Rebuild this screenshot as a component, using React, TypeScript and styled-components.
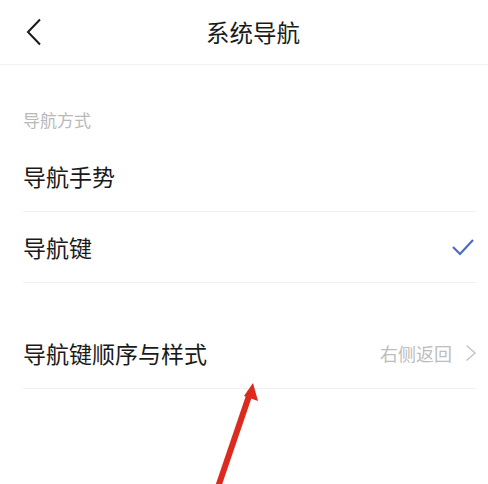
import React from "react";
import styled, { createGlobalStyle } from "styled-components";

const Global = createGlobalStyle`
  html, body { margin: 0; padding: 0; background: #ffffff; }
  body { font-family: "Noto Sans CJK SC", "Noto Sans", sans-serif; color: #1c1c1c; }
`;

const Page = styled.div`
  position: relative;
  width: 488px;
  height: 484px;
  overflow: hidden;
  background: #ffffff;
`;

const Header = styled.header`
  display: flex;
  align-items: center;
  height: 65px;
  padding-left: 26px;
  border-bottom: 1px solid #f3f3f3;
  box-sizing: border-box;
`;

const BackButton = styled.div`
  display: flex;
  width: 16px;
  height: 28px;
`;

const Title = styled.h1`
  flex: 1;
  margin: 0;
  padding-right: 24px;
  text-align: center;
  font-size: 23.5px;
  font-weight: 400;
  line-height: 30px;
  color: #1a1a1a;
`;

const SectionLabel = styled.div`
  padding: 43px 0 9px 23px;
  font-size: 17px;
  line-height: 24px;
  color: #b9b9b9;
`;

const Row = styled.div`
  display: flex;
  align-items: center;
  justify-content: space-between;
  height: 71px;
  margin: 0 11px 0 23px;
  border-bottom: 1px solid #f1f1f1;
  box-sizing: border-box;
`;

const RowLabel = styled.span`
  font-size: 23px;
  line-height: 30px;
  color: #1a1a1a;
`;

const Check = styled.svg`
  margin-right: 3px;
`;

const RowValue = styled.span`
  display: flex;
  align-items: center;
  gap: 13px;
  font-size: 18px;
  line-height: 24px;
  color: #bdbdbd;
`;

const Spacer = styled.div`
  height: 35px;
`;

const Arrow = styled.svg`
  position: absolute;
  left: 0;
  top: 0;
  pointer-events: none;
`;

export default function App() {
  return (
    <Page>
      <Global />
      <Header>
        <BackButton>
          <svg width="16" height="28" viewBox="0 0 16 28">
            <polyline points="14,1.5 2,14 14,26.5" fill="none" stroke="#1a1a1a" strokeWidth="2" strokeLinejoin="miter" />
          </svg>
        </BackButton>
        <Title>系统导航</Title>
      </Header>
      <SectionLabel>导航方式</SectionLabel>
      <Row>
        <RowLabel>导航手势</RowLabel>
      </Row>
      <Row>
        <RowLabel>导航键</RowLabel>
        <Check width="22" height="18" viewBox="0 0 22 18">
          <polyline points="1,9 8,16 21,2" fill="none" stroke="#4d69cc" strokeWidth="2.2" />
        </Check>
      </Row>
      <Spacer />
      <Row>
        <RowLabel>导航键顺序与样式</RowLabel>
        <RowValue>
          右侧返回
          <svg width="12" height="18" viewBox="0 0 12 18">
            <polyline points="1.5,1.5 10,9 1.5,16.5" fill="none" stroke="#c6c6c6" strokeWidth="1.6" />
          </svg>
        </RowValue>
      </Row>
      <Arrow width="488" height="484" viewBox="0 0 488 484">
        <line x1="217" y1="490" x2="249" y2="396" stroke="#dc2a1e" strokeWidth="6" />
        <polygon points="253,383 258,401 244,396" fill="#dc2a1e" />
      </Arrow>
    </Page>
  );
}
